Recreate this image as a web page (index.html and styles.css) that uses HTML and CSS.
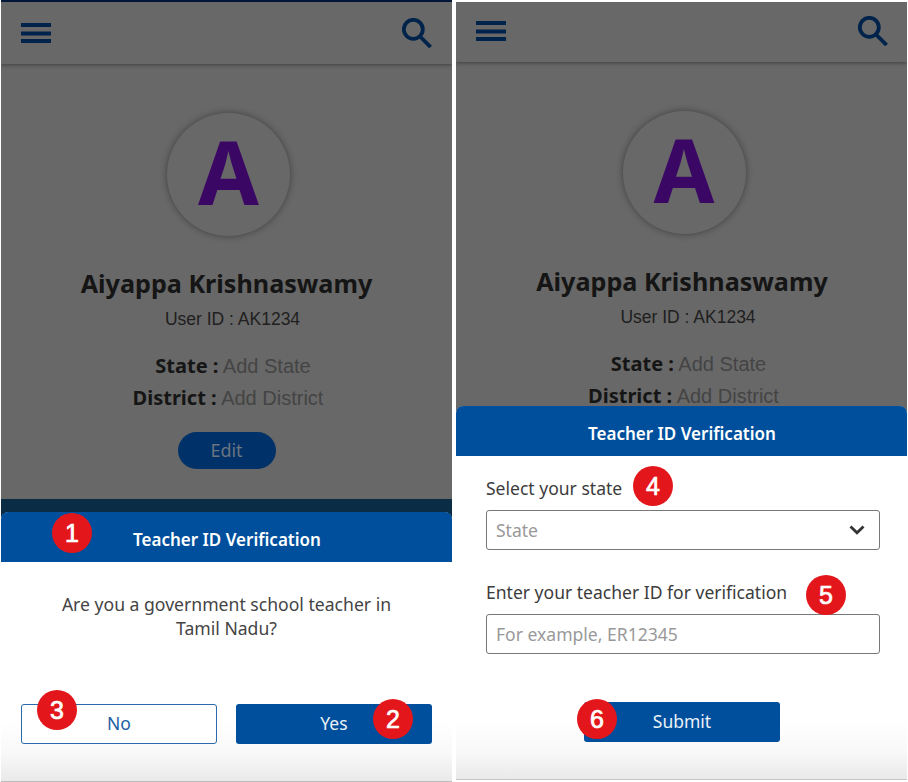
FILE: index.html
```html
<!DOCTYPE html>
<html lang="en">
<head>
<meta charset="utf-8">
<title>Teacher ID Verification</title>
<link rel="stylesheet" href="styles.css">
</head>
<body>
<main class="board">
  <section class="phone phone-a">
    <header class="topbar">
      <svg class="menu" viewBox="0 0 30 20"><path d="M0 0h30v4H0zM0 8.500h30v4H0zM0 16h30v4H0z"/></svg>
      <svg class="search" viewBox="0 0 30 30"><circle cx="11.300" cy="11.300" r="9.500"/><path d="M18 18.500 28.600 29"/></svg>
    </header>
    <div class="profile">
      <div class="avatar"><span>A</span></div>
      <h1>Aiyappa Krishnaswamy</h1>
      <p class="userid">User ID : AK1234</p>
      <p class="place state"><b>State :</b> Add State</p>
      <p class="place"><b>District :</b> Add District</p>
      <button class="edit">Edit</button>
    </div>
    <div class="strip"></div>
    <div class="sheet">
      <h2>Teacher ID Verification<span class="badge b1">1</span></h2>
      <p class="question">Are you a government school teacher in<br>Tamil Nadu?</p>
      <div class="actions">
        <button class="btn outline">No<span class="badge b3">3</span></button>
        <button class="btn solid">Yes<span class="badge b2">2</span></button>
      </div>
    </div>
  </section>
  <section class="phone phone-b">
    <header class="topbar">
      <svg class="menu" viewBox="0 0 30 20"><path d="M0 0h30v4H0zM0 8.500h30v4H0zM0 16h30v4H0z"/></svg>
      <svg class="search" viewBox="0 0 30 30"><circle cx="11.300" cy="11.300" r="9.500"/><path d="M18 18.500 28.600 29"/></svg>
    </header>
    <div class="profile">
      <div class="avatar"><span>A</span></div>
      <h1>Aiyappa Krishnaswamy</h1>
      <p class="userid">User ID : AK1234</p>
      <p class="place state"><b>State :</b> Add State</p>
      <p class="place"><b>District :</b> Add District</p>
    </div>
    <div class="sheet">
      <h2>Teacher ID Verification</h2>
      <div class="form">
        <div class="label"><span>Select your state</span><span class="badge b4">4</span></div>
        <div class="field"><span>State</span><svg class="chev" viewBox="0 0 16 10"><path d="M1.500 1.500 8 7.800 14.500 1.500"/></svg></div>
        <div class="label second"><span>Enter your teacher ID for verification</span><span class="badge b5">5</span></div>
        <div class="field"><span>For example, ER12345</span></div>
        <button class="btn solid submit">Submit<span class="badge b6">6</span></button>
      </div>
    </div>
  </section>
</main>
</body>
</html>
```

FILE: styles.css
```css
* { box-sizing: border-box; }
body { margin: 0; background: #fff; font-family: "Noto Sans", sans-serif; }
h1, h2, p { margin: 0; }
button { font: inherit; border: 0; padding: 0; }

.board {
  display: flex;
  gap: 4px;
  width: 908px;
  height: 782px;
  padding-left: 1px;
  overflow: hidden;
}
.phone { display: flex; flex-direction: column; background: #686868; width: 451px; }
.phone-a { height: 782px; border-top: 2px solid #001638; border-bottom: 1px solid #bdbdbd; }
.phone-b { height: 778px; margin-top: 2px; border-bottom: 1px solid #c4c4c4; }

.topbar {
  display: flex;
  justify-content: space-between;
  flex: none;
  height: 62px;
  padding: 16px 20px 0;
  box-shadow: 0 1px 4px rgba(0, 0, 0, .4);
  clip-path: inset(0 0 -8px 0);
}
.phone-b .topbar { height: 60px; padding: 14px 19px 0 20px; }
.menu { width: 30px; height: 20px; margin-top: 5px; fill: #00234b; }
.search { width: 30px; height: 30px; fill: none; stroke: #00234b; stroke-width: 3.800; }

.profile {
  display: flex;
  flex-direction: column;
  align-items: center;
  flex: none;
  height: 435px;
  padding-top: 49px;
  white-space: nowrap;
}
.phone-b .profile { height: 344px; padding-left: 1px; }
.avatar {
  display: flex;
  align-items: center;
  justify-content: center;
  flex: none;
  width: 123px;
  height: 123px;
  margin-left: 4px;
  padding-bottom: 6px;
  border-radius: 50%;
  box-shadow: 0 0 7px rgba(0, 0, 0, .4);
  color: #3b0764;
  font-size: 88px;
  font-weight: 700;
  line-height: 123px;
}
.profile h1 { margin-top: 29px; font-size: 25.150px; line-height: 36px; color: #151515; }
.userid {
  margin: 7px 0 0 12px;
  font: 17.500px/22px "Liberation Sans", sans-serif;
  color: #202020;
}
.place {
  margin: 0 0 12px 3px;
  font: 20px/20px "Liberation Sans", sans-serif;
  color: #444;
}
.place b { font: 700 20px/20px "Noto Sans", sans-serif; color: #151515; }
.place.state { margin: 26px 0 12px 13px; }
.edit {
  width: 98px;
  height: 37px;
  margin-top: 12px;
  padding-bottom: 2px;
  border-radius: 19px;
  background: #003168;
  color: #6b7480;
  font-size: 18px;
}
.strip { flex: none; height: 21px; margin-bottom: -8px; background: #0a2d45; }

.sheet {
  position: relative;
  flex: 1;
  border-radius: 8px 8px 0 0;
  background: linear-gradient(to top, #e9e9e9, #f8f8f8 26px, #fff 60px);
}
.sheet h2 {
  position: relative;
  height: 50px;
  padding-left: 1px;
  border-radius: 7px 7px 0 0;
  background: #004f9d;
  color: #fff;
  font-size: 17px;
  font-weight: 600;
  line-height: 55px;
  text-align: center;
}
.question { margin-top: 30px; font-size: 17.600px; line-height: 24px; text-align: center; color: #444; }
.actions { display: flex; gap: 19px; margin: 64px 20px 0; }
.btn { position: relative; width: 196px; height: 40px; padding-bottom: 2px; border-radius: 3px; font-size: 17.500px; }
.outline { border: 1.500px solid #2a69ab; background: #fff; color: #1c5ea5; }
.solid { background: #004f9d; color: #eaf1f8; }

.form { padding: 20px 27px 0 30px; }
.label { position: relative; height: 25px; font-size: 17.550px; line-height: 25px; color: #3c3c3c; white-space: nowrap; }
.label.second { margin-top: 30px; }
.field {
  display: flex;
  align-items: center;
  justify-content: space-between;
  width: 394px;
  height: 40px;
  margin-top: 9px;
  padding: 0 14px 1px 9px;
  border: 1px solid #777;
  border-radius: 3px;
  background: #fff;
  color: #999;
  font-size: 17.550px;
}
.chev { width: 16px; height: 10px; fill: none; stroke: #333; stroke-width: 2.800; }
.submit { display: block; margin: 48px 0 0 98px; }

.badge {
  position: absolute;
  width: 40px;
  height: 40px;
  border-radius: 50%;
  background: #e3171b;
  color: #fff;
  font: 400 25px/41px "Liberation Sans", sans-serif;
  -webkit-text-stroke: .7px #fff;
  text-align: center;
}
.b1 { left: 51px; top: 1px; }
.b2 { left: 137px; top: -5px; }
.b3 { left: 15px; top: -15px; }
.b4 { left: 147px; top: -10px; }
.b5 { left: 320px; top: -5px; }
.b6 { left: -7px; top: -3px; }
```
